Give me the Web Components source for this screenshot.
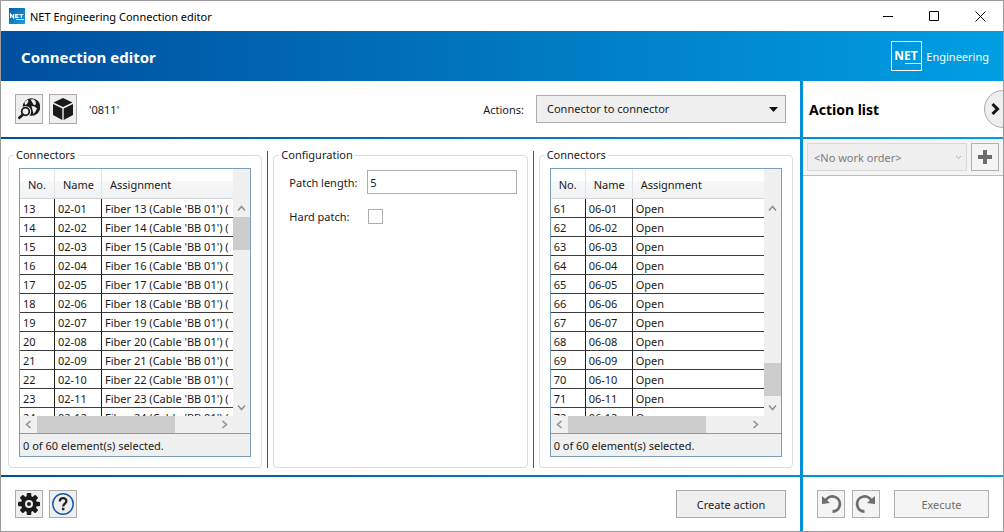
<!DOCTYPE html>
<html lang="en">
<head>
<meta charset="utf-8">
<title>NET Engineering Connection editor</title>
<style>
  html, body {
    height: 100%;
    margin: 0;
  }
  body {
    font-family: "Noto Sans", "Open Sans", sans-serif;
    font-size: 11px;
    line-height: 16px;
    color: #1a1a1a;
    --brand: linear-gradient(90deg, #004f9e, #009fe3);
    --face: #efefef;
    --edge: #acacac;
  }
</style>
</head>
<body>
<net-window></net-window>

<script>
const ICONS = {
  search: `<circle cx="13.500" cy="9" r="8.800" fill="#1a1a1a"/>
    <path d="M6.500 4l3-2.300 1 1.300-1.500 3-2 1zM12.500 1.500l3-.3 2 2 .5 3-2 1-1.500-2.500zM13.500 8l3 .5 2.500 2-1.500 3-2 2.500-1-4z" fill="#efefef"/>
    <circle cx="7.500" cy="13.500" r="5.600" fill="#efefef"/>
    <circle cx="7.500" cy="13.500" r="3.800" fill="#efefef" stroke="#1a1a1a" stroke-width="1.800"/>
    <path d="M5 16.500l-4.500 4" stroke="#1a1a1a" stroke-width="2.600"/>`,
  cube: `<path d="M11 0l9.500 4.500L11 9 1.500 4.500zM1 6l9.300 4.500V22L1 17zM21 6l-9.300 4.500V22L21 17z" fill="#1a1a1a"/>`,
  gear: `<g fill="#1a1a1a"><circle cx="11" cy="11" r="8"/>
    <rect x="8.700" y="0" width="4.600" height="22" rx="1"/><rect x="0" y="8.700" width="22" height="4.600" rx="1"/>
    <g transform="rotate(45 11 11)"><rect x="8.700" y="0" width="4.600" height="22" rx="1"/><rect x="0" y="8.700" width="22" height="4.600" rx="1"/></g></g>
    <circle cx="11" cy="11" r="3" fill="#1a1a1a" stroke="#efefef" stroke-width="2"/>`,
  help: `<circle cx="11" cy="11" r="10.200" fill="none" stroke="#1459a5" stroke-width="1.500"/>
    <path d="M7.800 8.400c0-4.300 6.600-4.200 6.600-.4 0 2.600-3.200 2.600-3.200 5.400" fill="none" stroke="#222" stroke-width="2.300"/>
    <rect x="9.900" y="14.800" width="2.500" height="2.500" fill="#222"/>`,
  plus: `<path d="M11 4v14M4 11h14" stroke="#6d6d6d" stroke-width="4"/>`,
  undo: `<path d="M5.500 8A7.500 7.500 0 1 1 12.500 18.500" fill="none" stroke="#6d6d6d" stroke-width="2.800"/>
    <path d="M2 3v8l8-1z" fill="#6d6d6d"/>`,
  redo: `<path d="M16.500 8A7.500 7.500 0 1 0 9.500 18.500" fill="none" stroke="#6d6d6d" stroke-width="2.800"/>
    <path d="M20 3v8l-8-1z" fill="#6d6d6d"/>`
};

const chevron = (d) => `<svg width="9" height="9" viewBox="0 0 9 9" fill="none" stroke="#8f8f8f" stroke-width="1.500"><path d="${d}"/></svg>`;

// Square button with an icon
class NetIconButton extends HTMLElement {
  connectedCallback() {
    this.attachShadow({ mode: 'open' });
    this.shadowRoot.innerHTML = `
      <style>
        :host { display: flex; width: 28px; height: var(--h, 28px); }
        button {
          flex: 1;
          display: flex;
          align-items: center;
          justify-content: center;
          padding: 0;
          border: 1px solid var(--edge);
          background: var(--face);
        }
        button:disabled { background: #f4f4f4; border-color: #adb2b5; }
      </style>
      <button aria-label="${this.getAttribute('label')}" ${this.hasAttribute('disabled') ? 'disabled' : ''}>
        <svg width="22" height="22" viewBox="0 0 22 22">${ICONS[this.getAttribute('icon')]}</svg>
      </button>
    `;
  }
}

class NetButton extends HTMLElement {
  connectedCallback() {
    this.attachShadow({ mode: 'open' });
    this.shadowRoot.innerHTML = `
      <style>
        :host { display: flex; height: 28px; }
        button {
          flex: 1;
          padding: 2px 0 0;
          border: 1px solid var(--edge);
          background: var(--face);
          font: inherit;
          color: #1a1a1a;
        }
        button:disabled { background: #f4f4f4; border-color: #adb2b5; color: #6d6d6d; }
      </style>
      <button ${this.hasAttribute('disabled') ? 'disabled' : ''}><slot></slot></button>
    `;
  }
}

// Drop-down, with an optional label in front
class NetSelect extends HTMLElement {
  connectedCallback() {
    const label = this.getAttribute('label');
    const disabled = this.hasAttribute('disabled');
    this.attachShadow({ mode: 'open' });
    this.shadowRoot.innerHTML = `
      <style>
        :host { display: flex; align-items: center; gap: 12px; }
        label { padding-top: 2px; }
        .box { display: grid; align-items: center; flex: 1 0 var(--box, 0); }
        .box > * { grid-area: 1 / 1; }
        select {
          appearance: none;
          width: 100%;
          height: 28px;
          padding: 0 24px 0 10px;
          border: 1px solid var(--edge);
          border-radius: 0;
          background: var(--face);
          font: inherit;
          color: #1a1a1a;
        }
        select:disabled { padding: 2px 20px 0 6px; border-color: #d9d9d9; color: #7b7b7b; opacity: 1; }
        svg { justify-self: end; margin-right: 8px; pointer-events: none; }
        .off { margin-right: 5px; }
      </style>
      ${label ? `<label for="pick">${label}</label>` : ''}
      <div class="box">
        <select id="pick" aria-label="${label || 'Work order'}" ${disabled ? 'disabled' : ''}>
          <option>${this.getAttribute('value').replace(/</g, '&lt;')}</option>
        </select>
        ${disabled
          ? '<svg class="off" width="7" height="5" viewBox="0 0 7 5" fill="none" stroke="#b0b0b0"><path d="M1 1l2.500 2.500L6 1"/></svg>'
          : '<svg width="9" height="5" viewBox="0 0 9 5"><path d="M0 0h9L4.500 5z" fill="#111"/></svg>'}
      </div>
    `;
  }
}

class NetGroup extends HTMLElement {
  connectedCallback() {
    this.attachShadow({ mode: 'open' });
    this.shadowRoot.innerHTML = `
      <style>
        :host { display: flex; min-width: 0; min-height: 0; }
        fieldset {
          flex: 1;
          display: flex;
          flex-direction: column;
          min-width: 0;
          margin: 0;
          padding: 0;
          border: 1px solid #d5dfe5;
          border-radius: 4px;
        }
        legend { margin-left: 5px; padding: 0 2px; }
        .content {
          flex: 1;
          display: flex;
          flex-direction: column;
          min-height: 0;
          padding: 5px 10px 10px;
        }
      </style>
      <fieldset>
        <legend>${this.getAttribute('heading')}</legend>
        <div class="content"><slot></slot></div>
      </fieldset>
    `;
  }
}

// Connector list with its scroll bars and selection footer
class NetConnectorGrid extends HTMLElement {
  connectedCallback() {
    const first = Number(this.getAttribute('first'));
    const module = this.getAttribute('module');
    const fiber = this.hasAttribute('fiber');
    let rows = '';
    for (let i = 0; i < 12; i++) {
      const no = first + i;
      const text = fiber ? `Fiber ${no} (Cable 'BB 01') (` : 'Open';
      rows += `<tr><td>${no}</td><td>${module}-${String(i + 1).padStart(2, '0')}</td><td>${text}</td></tr>`;
    }
    this.attachShadow({ mode: 'open' });
    this.shadowRoot.innerHTML = `
      <style>
        :host {
          flex: 1;
          display: grid;
          grid-template-columns: minmax(0, 1fr) 17px;
          grid-template-rows: minmax(0, 1fr) 17px auto;
          min-height: 0;
          border: 1px solid #7b9ebd;
        }
        .view { overflow: hidden; background: white; }
        table {
          width: 100%;
          table-layout: fixed;
          border-collapse: separate;
          border-spacing: 0;
        }
        th, td { box-sizing: border-box; overflow: hidden; white-space: nowrap; text-align: left; }
        th {
          height: 30px;
          padding: 2px 0 0 8px;
          font-weight: normal;
          background: linear-gradient(#fff 40%, #f7f8f9 40%, #f1f2f4);
          border-right: 1px solid #e3e4e6;
          border-bottom: 1px solid #d5d5d5;
        }
        td {
          height: 19px;
          padding: 2px 0 0 3px;
          border-right: 1px solid #1c1c1c;
          border-bottom: 1px solid #3c3c3c;
        }
        th:last-child, td:last-child { border-right: 0; }
        .no { width: 35px; }
        .name { width: 47px; }
        .bar { display: flex; background: #f0f0f0; }
        .bar button {
          flex: none;
          display: flex;
          align-items: center;
          justify-content: center;
          width: 17px;
          height: 17px;
          padding: 0;
          border: 0;
          background: none;
        }
        .thumb { background: #cdcdcd; }
        .v { flex-direction: column; padding-top: 31px; }
        .v .before { flex: var(--before) 0 0; }
        .v .thumb { flex: 33 0 0; }
        .v .after { flex: var(--after) 0 0; }
        .h { grid-column: 1 / 3; padding-right: 17px; }
        .h .thumb { flex: 138 0 0; }
        .h .after { flex: 41 0 0; }
        footer {
          grid-column: 1 / 3;
          padding: 4px 3px 2px;
          border-top: 1px solid #7b9ebd;
          background: #f0f0f0;
        }
      </style>
      <div class="view">
        <table>
          <thead><tr><th class="no">No.</th><th class="name">Name</th><th>Assignment</th></tr></thead>
          <tbody>${rows}</tbody>
        </table>
      </div>
      <div class="bar v">
        <button aria-label="Up">${chevron('M1 6.500l3.500-4L8 6.500')}</button>
        <div class="before"></div><div class="thumb"></div><div class="after"></div>
        <button aria-label="Down">${chevron('M1 2.500l3.500 4L8 2.500')}</button>
      </div>
      <div class="bar h">
        <button aria-label="Left">${chevron('M6.500 1l-4 3.500 4 3.500')}</button>
        <div class="thumb"></div><div class="after"></div>
        <button aria-label="Right">${chevron('M2.500 1l4 3.500-4 3.500')}</button>
      </div>
      <footer>0 of 60 element(s) selected.</footer>
    `;
    this.style.setProperty('--before', this.getAttribute('before'));
    this.style.setProperty('--after', 149 - this.getAttribute('before'));
  }
}

class NetPatchForm extends HTMLElement {
  connectedCallback() {
    this.attachShadow({ mode: 'open' });
    this.shadowRoot.innerHTML = `
      <style>
        :host {
          display: grid;
          grid-template-columns: 78px minmax(0, 1fr);
          row-gap: 14px;
          align-items: center;
          padding: 2px 0 0 5px;
        }
        label { padding-top: 1px; }
        input { margin: 0; border: 1px solid #abadb3; background: white; }
        [type=text] {
          box-sizing: border-box;
          width: 100%;
          height: 24px;
          padding: 0 2px;
          font: inherit;
          color: inherit;
        }
        [type=checkbox] { appearance: none; box-sizing: border-box; width: 15px; height: 15px; margin-left: 1px; }
        [type=checkbox]:checked { background: #555; }
      </style>
      <label for="len">Patch length:</label>
      <input id="len" type="text" value="5">
      <label for="hard">Hard patch:</label>
      <input id="hard" type="checkbox">
    `;
  }
}

class NetTitlebar extends HTMLElement {
  connectedCallback() {
    this.attachShadow({ mode: 'open' });
    this.shadowRoot.innerHTML = `
      <style>
        :host { display: flex; align-items: center; height: 30px; padding-left: 8px; background: white; color: black; }
        .name { flex: 1; padding-top: 1px; }
        button { width: 46px; height: 30px; padding: 0; border: 0; background: none; }
        svg { display: block; margin: auto; }
        .app {
          width: 16px;
          height: 16px;
          margin: 0 5px 0 0;
          background: linear-gradient(135deg, #0b5cab, #14a0dd);
        }
      </style>
      <svg class="app" viewBox="0 0 16 16" fill="none" stroke="white" stroke-width="1.200">
        <path d="M1.600 10V6.200l3 3.600V6M9.500 6.500H6.700v3h2.800M6.700 8h2.500M10.300 6.500h4M12.300 6.500V10"/>
        <path d="M7 11.500h8" stroke-width="1" opacity=".7"/>
      </svg>
      <span class="name"><slot></slot></span>
      <button aria-label="Minimize"><svg width="11" height="11" viewBox="0 0 11 11"><path d="M0 5.500h10" stroke="#000"/></svg></button>
      <button aria-label="Maximize"><svg width="11" height="11" viewBox="0 0 11 11"><path d="M.5.5h9v9h-9z" fill="none" stroke="#000"/></svg></button>
      <button aria-label="Close"><svg width="11" height="11" viewBox="0 0 11 11"><path d="M.5.5l10 10M10.500.5l-10 10" stroke="#000"/></svg></button>
    `;
  }
}

class NetBanner extends HTMLElement {
  connectedCallback() {
    this.attachShadow({ mode: 'open' });
    this.shadowRoot.innerHTML = `
      <style>
        :host {
          display: flex;
          align-items: center;
          justify-content: space-between;
          height: 50px;
          padding: 0 14px 0 20px;
          background: var(--brand);
          color: white;
        }
        h1 { margin: 0; padding-top: 2px; font-size: 15px; line-height: 20px; }
        .logo { display: flex; align-items: center; gap: 4px; }
        .logo span { padding-top: 2px; }
        .mark {
          box-sizing: border-box;
          width: 31px;
          height: 30px;
          padding: 6px 0 0 2px;
          border: 1px solid white;
          font-size: 12px;
          font-weight: bold;
          line-height: 15px;
        }
        .mark i { display: block; height: 1px; margin-left: 11px; background: white; }
      </style>
      <h1><slot></slot></h1>
      <div class="logo"><div class="mark">NET<i></i></div><span>Engineering</span></div>
    `;
  }
}

class NetWindow extends HTMLElement {
  connectedCallback() {
    this.attachShadow({ mode: 'open' });
    this.shadowRoot.innerHTML = `
      <style>
        :host {
          box-sizing: border-box;
          display: flex;
          flex-direction: column;
          height: 100%;
          border: 1px solid #9b9b9b;
        }
        /* the gaps of the grid let the brand gradient show as rules */
        main {
          flex: 1;
          display: grid;
          grid-template-columns: minmax(0, 1fr) 200px;
          grid-template-rows: 56px minmax(0, 1fr) 54px;
          gap: 2px 3px;
          min-height: 0;
          background: var(--brand);
        }
        main > * { background: white; min-width: 0; }
        .tools, .actions, .commands, .run { display: flex; align-items: center; }
        .tools { gap: 6px; padding: 0 14px; }
        .tools net-icon-button { --h: 30px; }
        .tools span { flex: 1; padding: 2px 0 0 6px; }
        .tools net-select { --box: 250px; }
        h2 { flex: 1; margin: 0; padding-top: 2px; font-size: 14px; line-height: 20px; color: black; }
        .actions { padding-left: 6px; overflow: hidden; }
        .round {
          flex: none;
          width: 38px;
          height: 38px;
          margin-right: -19px;
          padding: 0 0 0 5px;
          border: 1px solid var(--edge);
          border-radius: 50%;
          background: var(--face);
          text-align: left;
        }
        .round svg { display: block; }
        .groups {
          display: grid;
          grid-template-columns: minmax(0, 1fr) 1px minmax(0, 1fr) 1px minmax(0, 1fr);
          gap: 5px;
          min-height: 0;
          padding: 8px 7px 7px;
        }
        .split { margin-top: 4px; background: #555; }
        .order {
          display: flex;
          gap: 4px;
          padding: 4px;
          border-bottom: 1px solid #bcbcbc;
          background: #f4f4f4;
        }
        .order net-select { flex: 1; }
        .commands { gap: 6px; padding: 0 14px; }
        .commands net-button { width: 110px; margin-left: auto; }
        .run { gap: 7px; padding: 0 14px; }
        .run net-button { flex: 1; margin-left: 7px; }
      </style>
      <net-titlebar>NET Engineering Connection editor</net-titlebar>
      <net-banner>Connection editor</net-banner>
      <main>
        <section class="tools">
          <net-icon-button icon="search" label="Locate"></net-icon-button>
          <net-icon-button icon="cube" label="Object"></net-icon-button>
          <span>'0811'</span>
          <net-select label="Actions:" value="Connector to connector"></net-select>
        </section>
        <section class="actions">
          <h2>Action list</h2>
          <button class="round" aria-label="Collapse">
            <svg width="11" height="14" viewBox="0 0 11 14"><path d="M2.500 2l5 5-5 5" fill="none" stroke="#111" stroke-width="3"/></svg>
          </button>
        </section>
        <section class="groups">
          <net-group heading="Connectors"><net-connector-grid first="13" module="02" fiber before="0"></net-connector-grid></net-group>
          <div class="split"></div>
          <net-group heading="Configuration"><net-patch-form></net-patch-form></net-group>
          <div class="split"></div>
          <net-group heading="Connectors"><net-connector-grid first="61" module="06" before="146"></net-connector-grid></net-group>
        </section>
        <section>
          <div class="order">
            <net-select value="<No work order>" disabled></net-select>
            <net-icon-button icon="plus" label="Add" disabled></net-icon-button>
          </div>
        </section>
        <section class="commands">
          <net-icon-button icon="gear" label="Settings"></net-icon-button>
          <net-icon-button icon="help" label="Help"></net-icon-button>
          <net-button>Create action</net-button>
        </section>
        <section class="run">
          <net-icon-button icon="undo" label="Undo" disabled></net-icon-button>
          <net-icon-button icon="redo" label="Redo" disabled></net-icon-button>
          <net-button disabled>Execute</net-button>
        </section>
      </main>
    `;
  }
}

customElements.define('net-icon-button', NetIconButton);
customElements.define('net-button', NetButton);
customElements.define('net-select', NetSelect);
customElements.define('net-group', NetGroup);
customElements.define('net-connector-grid', NetConnectorGrid);
customElements.define('net-patch-form', NetPatchForm);
customElements.define('net-titlebar', NetTitlebar);
customElements.define('net-banner', NetBanner);
customElements.define('net-window', NetWindow);
</script>
</body>
</html>
